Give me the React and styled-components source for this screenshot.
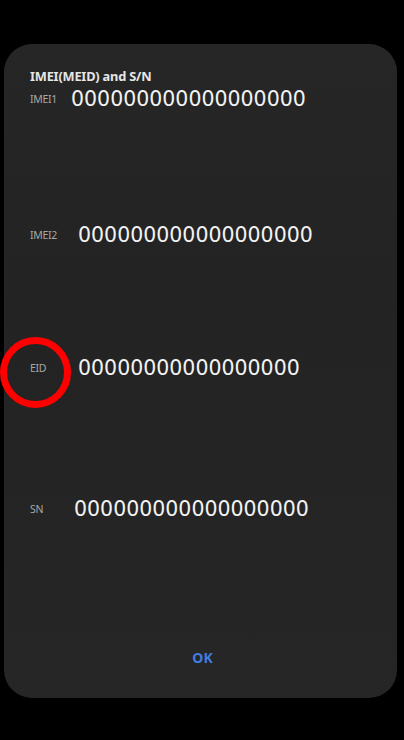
import React from "react";
import styled, { createGlobalStyle } from "styled-components";

const Global = createGlobalStyle`
  html, body { margin: 0; padding: 0; background: #000; }
  body { width: 404px; height: 740px; overflow: hidden; font-family: "DejaVu Sans", "Noto Sans", sans-serif; }
`;

const Screen = styled.div`
  width: 404px;
  height: 740px;
  background: #000;
  padding: 44px 7px 0 4px;
  box-sizing: border-box;
  position: relative;
`;

const Dialog = styled.div`
  height: 654px;
  border-radius: 28px;
  background: linear-gradient(180deg, #262626 0%, #232323 40%, #262626 100%);
  display: flex;
  flex-direction: column;
  padding: 24px 0 30px 26px;
  box-sizing: border-box;
`;

const Title = styled.div`
  font-family: "Noto Sans", sans-serif;
  font-weight: 700;
  font-size: 12.8px;
  line-height: 16px;
  color: #e6e6e6;
  letter-spacing: -0.2px;
`;

const Row = styled.div`
  display: flex;
  align-items: center;
  height: 24px;
  margin-top: ${(p) => p.$top}px;
`;

const Label = styled.span`
  font-family: "Noto Sans", sans-serif;
  font-size: 10.5px;
  color: #a8a8a8;
  width: ${(p) => p.$w}px;
  flex: none;
  letter-spacing: -0.3px;
`;

const Value = styled.span`
  font-family: "DejaVu Sans", sans-serif;
  font-size: 20.5px;
  color: #f2f2f2;
  white-space: nowrap;
`;

const Footer = styled.div`
  margin-top: auto;
  display: flex;
  justify-content: center;
  padding-right: 26px;
`;

const OkButton = styled.button`
  background: none;
  border: none;
  padding: 0;
  font-family: "Noto Sans", sans-serif;
  font-weight: 700;
  font-size: 14px;
  line-height: 20px;
  color: #3f7ee0;
  margin-left: 4px;
`;

const Ring = styled.div`
  position: absolute;
  left: 0px;
  top: 337px;
  width: 71px;
  height: 71px;
  border: 7px solid #ff0000;
  border-radius: 50%;
  box-sizing: border-box;
`;

const rows = [
  { label: "IMEI1", value: "000000000000000000", top: 3, w: 41 },
  { label: "IMEI2", value: "000000000000000000", top: 112, w: 48 },
  { label: "EID", value: "00000000000000000", top: 109, w: 48 },
  { label: "SN", value: "000000000000000000", top: 117, w: 44 },
];

export default function App() {
  return (
    <>
      <Global />
      <Screen>
        <Dialog>
          <Title>IMEI(MEID) and S/N</Title>
          {rows.map((r) => (
            <Row key={r.label} $top={r.top}>
              <Label $w={r.w}>{r.label}</Label>
              <Value>{r.value}</Value>
            </Row>
          ))}
          <Footer>
            <OkButton>OK</OkButton>
          </Footer>
        </Dialog>
        <Ring />
      </Screen>
    </>
  );
}
